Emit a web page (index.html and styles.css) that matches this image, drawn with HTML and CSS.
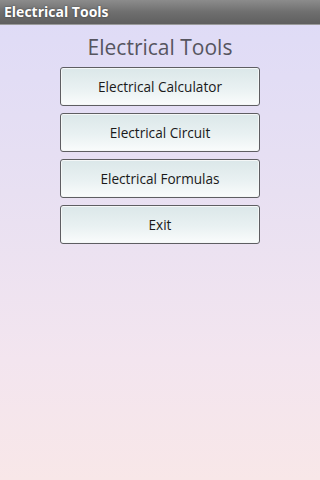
FILE: index.html
```html
<!DOCTYPE html>
<html>
<head>
<meta charset="utf-8">
<link rel="stylesheet" href="styles.css">
</head>
<body>
<div class="titlebar">Electrical Tools</div>
<main class="content">
  <h1 class="heading">Electrical Tools</h1>
  <div class="buttons">
    <button class="btn">Electrical Calculator</button>
    <button class="btn">Electrical Circuit</button>
    <button class="btn">Electrical Formulas</button>
    <button class="btn">Exit</button>
  </div>
</main>
</body>
</html>
```
FILE: styles.css
```css
html, body {
  margin: 0;
  padding: 0;
  width: 320px;
  height: 480px;
  overflow: hidden;
}
body {
  font-family: "Open Sans", "DejaVu Sans", sans-serif;
  background: linear-gradient(to bottom, #dedbf7 0%, #e8e0f2 40%, #f3e5ef 75%, #f8e7e8 100%);
}
.titlebar {
  height: 24px;
  border-bottom: 1px solid #9a9a9a;
  background: linear-gradient(to bottom, #8c8c8c 0%, #6f6f6f 50%, #5f5f5f 100%);
  color: #fff;
  font-weight: bold;
  font-size: 14px;
  line-height: 23px;
  padding-left: 4px;
  text-shadow: 0 0 2px rgba(0,0,0,0.5);
}
.content {
  display: flex;
  flex-direction: column;
  align-items: center;
}
.heading {
  margin: 7px 0 0;
  font-size: 21px;
  font-weight: normal;
  color: #56555f;
  line-height: 30px;
}
.buttons {
  margin-top: 5px;
  display: flex;
  flex-direction: column;
  gap: 7px;
}
.btn {
  width: 200px;
  height: 39px;
  border: 1px solid #5e5e62;
  border-radius: 3px;
  background: linear-gradient(to bottom, #dbe7e9 0%, #e9f1f2 55%, #fafcfc 100%);
  font-family: "Open Sans", "DejaVu Sans", sans-serif;
  font-size: 13.6px;
  color: #1a1a1a;
  padding: 0;
  box-shadow: inset 0 0 0 1px #f4f7f7;
}
```
